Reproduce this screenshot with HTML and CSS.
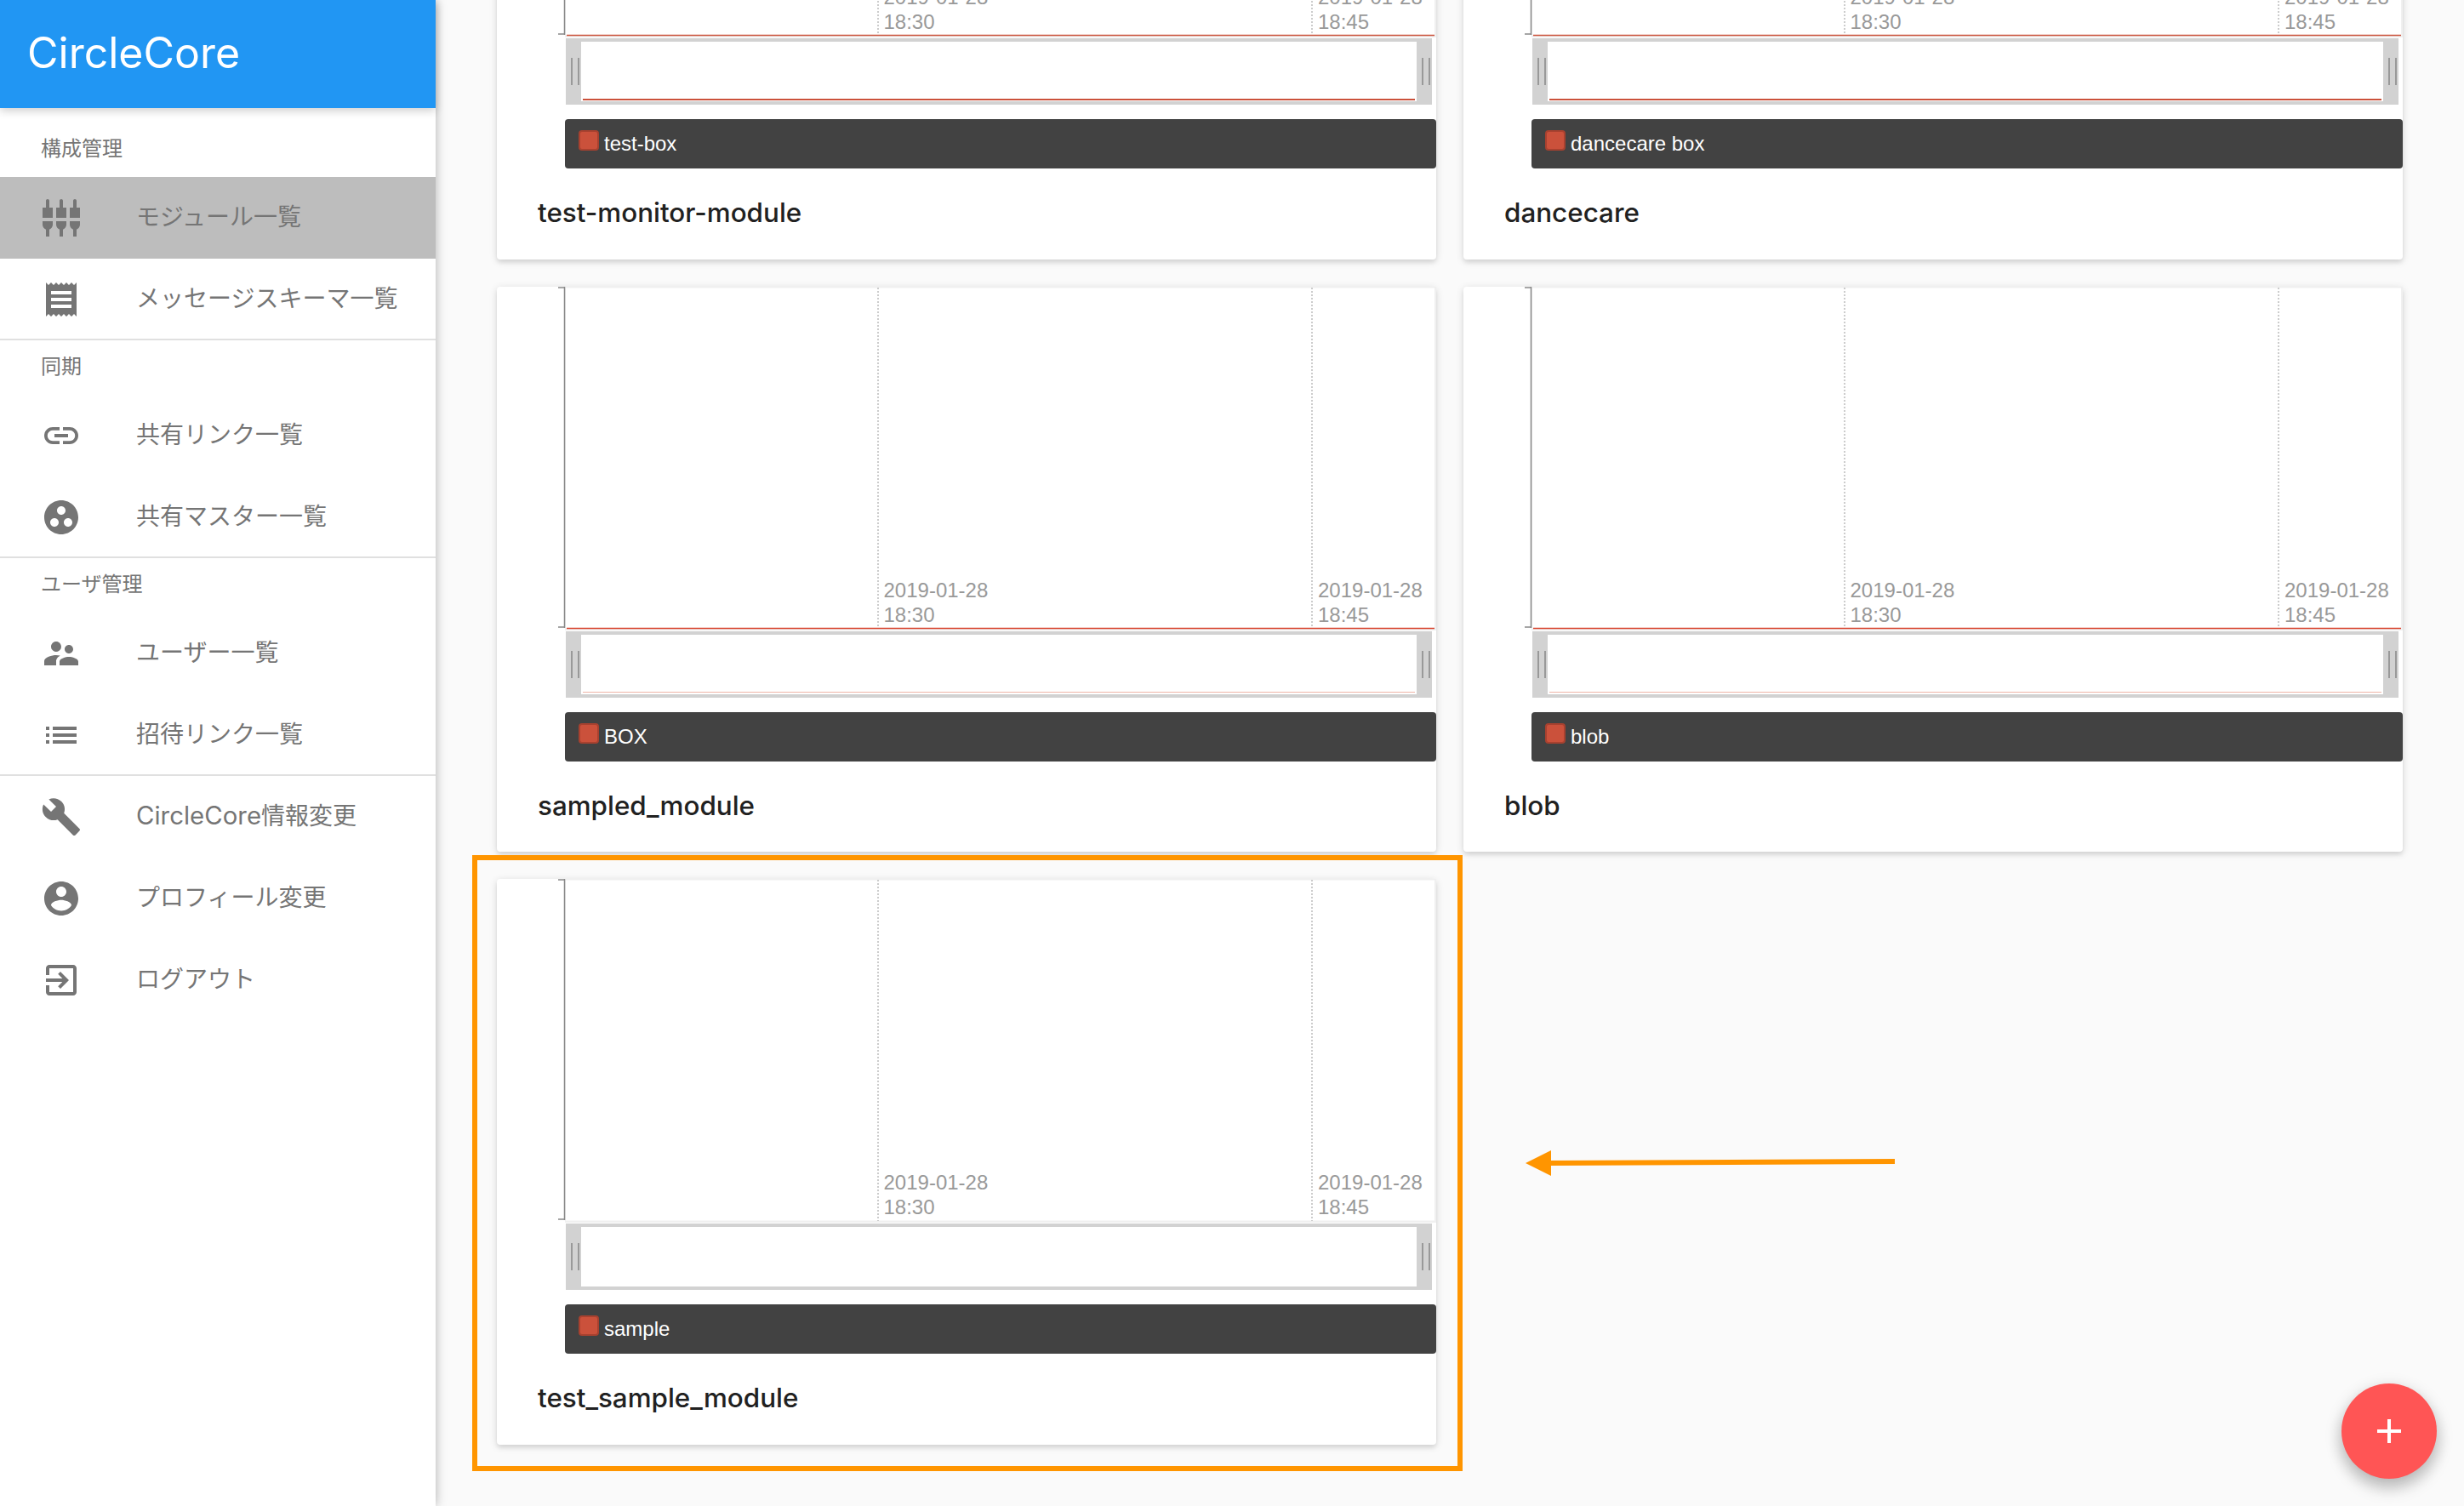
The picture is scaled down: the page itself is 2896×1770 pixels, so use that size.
FILE: index.html
```html
<!DOCTYPE html>
<html lang="ja">
<head>
<meta charset="utf-8">
<title>CircleCore</title>
<link rel="stylesheet" href="styles.css">
</head>
<body>
<aside class="sidebar">
  <header class="brand">CircleCore</header>
  <nav class="nav">
    <section class="nav-group nav-group-first">
      <h2 class="nav-heading">構成管理</h2>
      <a class="nav-row nav-row-active"><svg class="nav-icon" viewBox="0 0 24 24"><path d="M5 2c0-.55-.45-1-1-1s-1 .45-1 1v4H1v6h6V6H5V2zm4 14c0 1.3.84 2.4 2 2.82V23h2v-4.18c1.16-.41 2-1.51 2-2.82v-2H9v2zm-8 0c0 1.3.84 2.4 2 2.82V23h2v-4.18C6.16 18.4 7 17.3 7 16v-2H1v2zM21 6V2c0-.55-.45-1-1-1s-1 .45-1 1v4h-2v6h6V6h-2zm-8-4c0-.55-.45-1-1-1s-1 .45-1 1v4H9v6h6V6h-2V2zm4 14c0 1.3.84 2.4 2 2.82V23h2v-4.18c1.16-.41 2-1.51 2-2.82v-2h-6v2z"/></svg><span class="nav-label">モジュール一覧</span></a>
      <a class="nav-row"><svg class="nav-icon" viewBox="0 0 24 24"><path d="M18 17H6v-2h12v2zm0-4H6v-2h12v2zm0-4H6V7h12v2zM3 22l1.5-1.5L6 22l1.5-1.5L9 22l1.5-1.5L12 22l1.5-1.5L15 22l1.5-1.5L18 22l1.5-1.5L21 22V2l-1.5 1.5L18 2l-1.5 1.5L15 2l-1.5 1.5L12 2l-1.5 1.5L9 2 7.5 3.5 6 2 4.5 3.5 3 2v20z"/></svg><span class="nav-label">メッセージスキーマ一覧</span></a>
    </section>
    <section class="nav-group">
      <h2 class="nav-heading">同期</h2>
      <a class="nav-row"><svg class="nav-icon" viewBox="0 0 24 24"><path d="M3.9 12c0-1.71 1.39-3.1 3.1-3.1h4V7H7c-2.76 0-5 2.24-5 5s2.24 5 5 5h4v-1.9H7c-1.71 0-3.1-1.39-3.1-3.1zM8 13h8v-2H8v2zm9-6h-4v1.9h4c1.71 0 3.1 1.39 3.1 3.1s-1.39 3.1-3.1 3.1h-4V17h4c2.76 0 5-2.24 5-5s-2.24-5-5-5z"/></svg><span class="nav-label">共有リンク一覧</span></a>
      <a class="nav-row"><svg class="nav-icon" viewBox="0 0 24 24"><path d="M12 2C6.48 2 2 6.48 2 12s4.48 10 10 10 10-4.48 10-10S17.52 2 12 2zM8 17.5c-1.38 0-2.5-1.12-2.5-2.5s1.12-2.5 2.5-2.5 2.5 1.12 2.5 2.5-1.12 2.5-2.5 2.5zM9.5 8c0-1.38 1.12-2.5 2.5-2.5s2.5 1.12 2.5 2.5-1.12 2.5-2.5 2.5S9.5 9.38 9.5 8zm6.5 9.5c-1.38 0-2.5-1.12-2.5-2.5s1.12-2.5 2.5-2.5 2.5 1.12 2.5 2.5-1.12 2.5-2.5 2.5z"/></svg><span class="nav-label">共有マスター一覧</span></a>
    </section>
    <section class="nav-group">
      <h2 class="nav-heading">ユーザ管理</h2>
      <a class="nav-row"><svg class="nav-icon" viewBox="0 0 24 24"><path d="M16.5 12c1.38 0 2.49-1.12 2.49-2.5S17.88 7 16.5 7C15.12 7 14 8.12 14 9.5s1.12 2.5 2.5 2.5zM9 11c1.66 0 2.99-1.34 2.99-3S10.66 5 9 5C7.34 5 6 6.34 6 8s1.34 3 3 3zm7.5 3c-1.83 0-5.5.92-5.5 2.75V19h11v-2.25c0-1.83-3.67-2.75-5.5-2.75zM9 13c-2.33 0-7 1.17-7 3.5V19h7v-2.25c0-.85.33-2.34 2.37-3.47C10.5 13.1 9.66 13 9 13z"/></svg><span class="nav-label">ユーザー一覧</span></a>
      <a class="nav-row"><svg class="nav-icon" viewBox="0 0 24 24"><path d="M3 13h2v-2H3v2zm0 4h2v-2H3v2zm0-8h2V7H3v2zm4 4h14v-2H7v2zm0 4h14v-2H7v2zM7 7v2h14V7H7z"/></svg><span class="nav-label">招待リンク一覧</span></a>
    </section>
    <section class="nav-group nav-group-plain">
      <a class="nav-row"><svg class="nav-icon" viewBox="0 0 24 24"><path d="M22.7 19l-9.1-9.1c.9-2.3.4-5-1.5-6.9-2-2-5-2.4-7.4-1.3L9 6 6 9 1.6 4.7C.4 7.1.9 10.1 2.9 12.1c1.9 1.9 4.6 2.4 6.9 1.5l9.1 9.1c.4.4 1 .4 1.4 0l2.3-2.3c.5-.4.5-1.1.1-1.4z"/></svg><span class="nav-label"><span class="nav-latin">CircleCore</span>情報変更</span></a>
      <a class="nav-row"><svg class="nav-icon" viewBox="0 0 24 24"><path d="M12 2C6.48 2 2 6.48 2 12s4.48 10 10 10 10-4.48 10-10S17.52 2 12 2zm0 3c1.66 0 3 1.34 3 3s-1.34 3-3 3-3-1.34-3-3 1.34-3 3-3zm0 14.2c-2.5 0-4.71-1.28-6-3.22.03-1.99 4-3.08 6-3.08 1.99 0 5.97 1.09 6 3.08-1.29 1.94-3.5 3.22-6 3.22z"/></svg><span class="nav-label">プロフィール変更</span></a>
      <a class="nav-row"><svg class="nav-icon" viewBox="0 0 24 24"><path d="M10.09 15.59L11.5 17l5-5-5-5-1.41 1.41L12.67 11H3v2h9.67l-2.58 2.59zM19 3H5c-1.11 0-2 .9-2 2v4h2V5h14v14H5v-4H3v4c0 1.1.89 2 2 2h14c1.1 0 2-.9 2-2V5c0-1.1-.9-2-2-2z"/></svg><span class="nav-label">ログアウト</span></a>
    </section>
  </nav>
</aside>

<main class="main">
  <div class="cards">
    <article class="card">
      <svg class="chart" viewBox="0 0 1104 404">
        <rect class="chart-edge" x="80" y="0" width="1024" height="404"/><rect class="chart-bg" x="81" y="1.5" width="1021" height="400"/>
        <line class="axis" x1="79.5" y1="0" x2="79.5" y2="401"/><line class="axis" x1="72" y1="1" x2="80" y2="1"/><line class="axis" x1="72" y1="400" x2="80" y2="400"/>
        <line class="grid" x1="448" y1="1" x2="448" y2="402"/><line class="grid" x1="958" y1="1" x2="958" y2="402"/>
        <line class="trace" x1="82" y1="401.5" x2="1102" y2="401.5"/>
        <text class="tick" x="454.5" y="365">2019-01-28</text><text class="tick" x="454.5" y="394">18:30</text>
        <text class="tick" x="965" y="365">2019-01-28</text><text class="tick" x="965" y="394">18:45</text>
      </svg>
      <div class="brush"><div class="grip"></div><div class="window"><div class="mini-trace"></div></div><div class="grip grip-end"></div></div>
      <div class="legend"><span class="swatch"></span><span>test-box</span></div>
      <h3 class="card-title">test-monitor-module</h3>
    </article>
    <article class="card">
      <svg class="chart" viewBox="0 0 1104 404">
        <rect class="chart-edge" x="80" y="0" width="1024" height="404"/><rect class="chart-bg" x="81" y="1.5" width="1021" height="400"/>
        <line class="axis" x1="79.5" y1="0" x2="79.5" y2="401"/><line class="axis" x1="72" y1="1" x2="80" y2="1"/><line class="axis" x1="72" y1="400" x2="80" y2="400"/>
        <line class="grid" x1="448" y1="1" x2="448" y2="402"/><line class="grid" x1="958" y1="1" x2="958" y2="402"/>
        <line class="trace" x1="82" y1="401.5" x2="1102" y2="401.5"/>
        <text class="tick" x="454.5" y="365">2019-01-28</text><text class="tick" x="454.5" y="394">18:30</text>
        <text class="tick" x="965" y="365">2019-01-28</text><text class="tick" x="965" y="394">18:45</text>
      </svg>
      <div class="brush"><div class="grip"></div><div class="window"><div class="mini-trace"></div></div><div class="grip grip-end"></div></div>
      <div class="legend"><span class="swatch"></span><span>dancecare box</span></div>
      <h3 class="card-title">dancecare</h3>
    </article>
    <article class="card">
      <svg class="chart" viewBox="0 0 1104 404">
        <rect class="chart-edge" x="80" y="0" width="1024" height="404"/><rect class="chart-bg" x="81" y="1.5" width="1021" height="400"/>
        <line class="axis" x1="79.5" y1="0" x2="79.5" y2="401"/><line class="axis" x1="72" y1="1" x2="80" y2="1"/><line class="axis" x1="72" y1="400" x2="80" y2="400"/>
        <line class="grid" x1="448" y1="1" x2="448" y2="402"/><line class="grid" x1="958" y1="1" x2="958" y2="402"/>
        <line class="trace trace-bright" x1="82" y1="401.5" x2="1102" y2="401.5"/>
        <text class="tick" x="454.5" y="365">2019-01-28</text><text class="tick" x="454.5" y="394">18:30</text>
        <text class="tick" x="965" y="365">2019-01-28</text><text class="tick" x="965" y="394">18:45</text>
      </svg>
      <div class="brush"><div class="grip"></div><div class="window"><div class="mini-trace mini-trace-faint"></div></div><div class="grip grip-end"></div></div>
      <div class="legend"><span class="swatch"></span><span>BOX</span></div>
      <h3 class="card-title">sampled_module</h3>
    </article>
    <article class="card">
      <svg class="chart" viewBox="0 0 1104 404">
        <rect class="chart-edge" x="80" y="0" width="1024" height="404"/><rect class="chart-bg" x="81" y="1.5" width="1021" height="400"/>
        <line class="axis" x1="79.5" y1="0" x2="79.5" y2="401"/><line class="axis" x1="72" y1="1" x2="80" y2="1"/><line class="axis" x1="72" y1="400" x2="80" y2="400"/>
        <line class="grid" x1="448" y1="1" x2="448" y2="402"/><line class="grid" x1="958" y1="1" x2="958" y2="402"/>
        <line class="trace trace-bright" x1="82" y1="401.5" x2="1102" y2="401.5"/>
        <text class="tick" x="454.5" y="365">2019-01-28</text><text class="tick" x="454.5" y="394">18:30</text>
        <text class="tick" x="965" y="365">2019-01-28</text><text class="tick" x="965" y="394">18:45</text>
      </svg>
      <div class="brush"><div class="grip"></div><div class="window"><div class="mini-trace mini-trace-faint"></div></div><div class="grip grip-end"></div></div>
      <div class="legend"><span class="swatch"></span><span>blob</span></div>
      <h3 class="card-title">blob</h3>
    </article>
    <article class="card">
      <svg class="chart" viewBox="0 0 1104 404">
        <rect class="chart-edge" x="80" y="0" width="1024" height="404"/><rect class="chart-bg" x="81" y="1.5" width="1021" height="400"/>
        <line class="axis" x1="79.5" y1="0" x2="79.5" y2="401"/><line class="axis" x1="72" y1="1" x2="80" y2="1"/><line class="axis" x1="72" y1="400" x2="80" y2="400"/>
        <line class="grid" x1="448" y1="1" x2="448" y2="402"/><line class="grid" x1="958" y1="1" x2="958" y2="402"/>
        <text class="tick" x="454.5" y="365">2019-01-28</text><text class="tick" x="454.5" y="394">18:30</text>
        <text class="tick" x="965" y="365">2019-01-28</text><text class="tick" x="965" y="394">18:45</text>
      </svg>
      <div class="brush"><div class="grip"></div><div class="window"></div><div class="grip grip-end"></div></div>
      <div class="legend"><span class="swatch"></span><span>sample</span></div>
      <h3 class="card-title">test_sample_module</h3>
    </article>
  </div>
</main>

<div class="highlight"></div>
<svg class="arrow" viewBox="0 0 440 34"><line class="arrow-shaft" x1="28" y1="17" x2="434" y2="15"/><polygon class="arrow-head" points="0,17 30,2 30,32"/></svg>

<button class="fab" type="button" aria-label="追加"><svg class="fab-icon" viewBox="0 0 24 24"><path d="M19 13h-6v6h-2v-6H5v-2h6V5h2v6h6v2z"/></svg></button>
</body>
</html>
```

FILE: styles.css
```css
* { box-sizing: border-box; }

html, body {
  height: 100%;
  margin: 0;
  overflow: hidden;
}

body {
  display: flex;
  background: #fafafa;
  font-family: Inter, "Noto Sans CJK JP", sans-serif;
}

.sidebar {
  position: relative;
  z-index: 2;
  flex: 0 0 512px;
  height: 1770px;
  background: #fff;
  box-shadow: 0 0 12px rgba(0, 0, 0, .3);
}

.brand {
  display: flex;
  align-items: center;
  height: 127px;
  padding: 0 0 3px 32px;
  background: #2196f3;
  color: #fff;
  font-size: 50px;
  box-shadow: 0 3px 10px rgba(0, 0, 0, .2);
}

.nav-group {
  box-shadow: inset 0 -2px 0 #e0e0e0;
}

.nav-group-first {
  padding-top: 17px;
}

.nav-group-plain {
  box-shadow: none;
}

.nav-heading {
  display: flex;
  align-items: center;
  height: 64px;
  margin: 0;
  padding: 0 0 8px 48px;
  color: #757575;
  font-size: 24px;
  font-weight: 400;
}

.nav-row {
  display: flex;
  align-items: center;
  height: 96px;
  padding-left: 48px;
  color: #757575;
  font-size: 28px;
}

.nav-row-active {
  background: #bdbdbd;
}

.nav-icon {
  flex: 0 0 48px;
  width: 48px;
  height: 48px;
  margin-right: 64px;
  fill: #757575;
}

.nav-label {
  padding-bottom: 6px;
}

.nav-latin {
  font-size: 29.4px;
}

.main {
  flex: 1;
  height: 1770px;
  overflow: hidden;
}

.cards {
  display: grid;
  grid-template-columns: 1104px 1104px;
  gap: 32px;
  margin-top: -360px;
  padding: 0 72px;
}

.card {
  height: 664.5px;
  border-radius: 4px;
  background: #fff;
  box-shadow: 0 2px 10px rgba(0, 0, 0, .14), 0 4px 4px rgba(0, 0, 0, .06);
}

.chart {
  display: block;
  width: 1104px;
  height: 404px;
}

.chart-edge { fill: #f0f0f0; }
.chart-bg { fill: #fff; }

.axis {
  stroke: #888;
  stroke-width: 1.5;
}

.grid {
  stroke: #ccc;
  stroke-width: 2;
  stroke-dasharray: 2 2;
}

.trace {
  stroke: #cb513b;
  stroke-width: 1.5;
}

.trace-bright {
  stroke: #d8402a;
}

.tick {
  fill: #999;
  font-family: "Liberation Sans", Arial, sans-serif;
  font-size: 24px;
}

.brush {
  display: flex;
  width: 1018.5px;
  height: 78px;
  margin: 1px 0 0 80.5px;
  padding: 4px 0;
  background: #d2d2d2;
}

.grip {
  position: relative;
  flex: 0 0 18px;
}

.grip::before {
  content: "";
  position: absolute;
  top: 19px;
  left: 6.5px;
  width: 6px;
  height: 32px;
  border-left: 2px solid #999;
  border-right: 2px solid #999;
}

.grip-end::before {
  left: 6px;
}

.window {
  position: relative;
  flex: 1;
  background: #fff;
}

.mini-trace {
  position: absolute;
  left: 2px;
  right: 2px;
  bottom: 1.5px;
  height: 1.5px;
  background: #cb513b;
}

.mini-trace-faint {
  background: #efb4a8;
}

.legend {
  display: flex;
  align-items: center;
  gap: 6px;
  width: 1024px;
  height: 58px;
  margin: 17px 0 0 80px;
  padding-left: 16px;
  border-radius: 4px;
  background: #424242;
  color: #fff;
  font-family: "Liberation Sans", Arial, sans-serif;
  font-size: 24px;
  line-height: 30px;
}

.swatch {
  align-self: flex-start;
  width: 24px;
  height: 24px;
  margin-top: 13px;
  border: 2px solid #a8412f;
  border-radius: 4px;
  background: #cb513b;
}

.card-title {
  margin: 32px 0 0;
  padding-left: 48px;
  color: #212121;
  font-size: 31.4px;
  font-weight: 500;
  line-height: 40px;
}

.highlight {
  position: absolute;
  left: 555px;
  top: 1005px;
  width: 1164px;
  height: 724px;
  border: 6px solid #ff9500;
  pointer-events: none;
}

.arrow {
  position: absolute;
  left: 1793px;
  top: 1350px;
  width: 440px;
  height: 34px;
}

.arrow-shaft {
  stroke: #ff9500;
  stroke-width: 6;
}

.arrow-head {
  fill: #ff9500;
}

.fab {
  position: fixed;
  right: 32px;
  bottom: 32px;
  display: flex;
  align-items: center;
  justify-content: center;
  width: 112px;
  height: 112px;
  padding: 0;
  border: 0;
  border-radius: 50%;
  background: #ff5555;
  box-shadow: 0 6px 20px rgba(0, 0, 0, .2), 0 12px 20px rgba(0, 0, 0, .14);
}

.fab-icon {
  width: 48px;
  height: 48px;
  fill: #fff;
}
```
